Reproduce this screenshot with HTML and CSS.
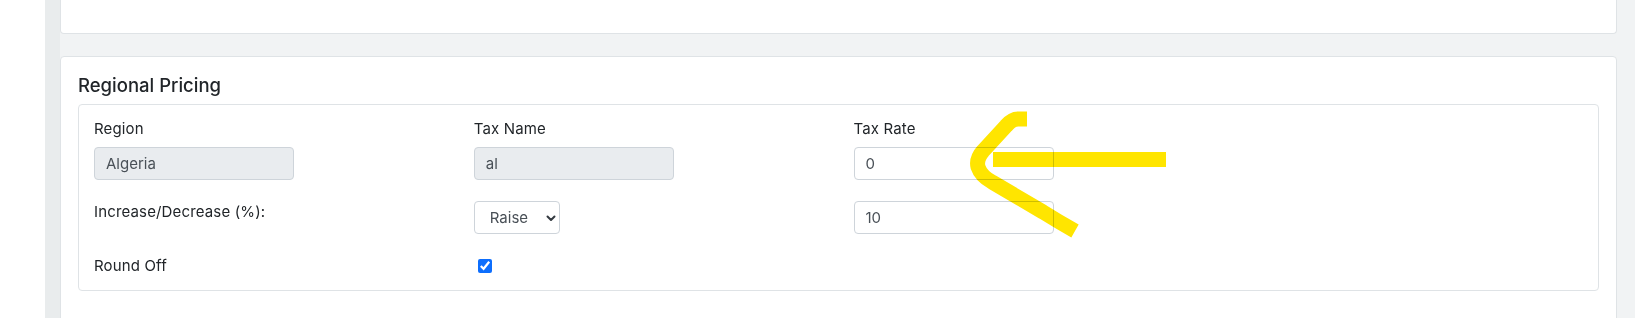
FILE: index.html
```html
<!DOCTYPE html>
<html lang="en">
<head>
  <meta charset="UTF-8" />
  <meta name="viewport" content="width=device-width, initial-scale=1.0" />
  <title>Regional Pricing</title>
  <link rel="stylesheet" href="styles.css">
</head>
<body>
  <div class="layout">
    <aside class="sidebar"></aside>

    <main class="content">
      <section class="card card-top"></section>

      <section class="card card-pricing">
        <h5 class="card-title">Regional Pricing</h5>

        <div class="pricing-box">
          <div class="pricing-row">
            <div class="cell">
              <label for="region">Region</label>
              <input type="text" id="region" class="field field-w" value="Algeria" disabled />
            </div>
            <div class="cell">
              <label for="taxName">Tax Name</label>
              <input type="text" id="taxName" class="field field-w" value="al" disabled />
            </div>
            <div class="cell">
              <label for="taxRate">Tax Rate</label>
              <input type="text" id="taxRate" class="field field-w" value="0" />
            </div>
            <div class="cell"></div>
          </div>

          <div class="pricing-row">
            <div class="cell">
              <label for="mode">Increase/Decrease (%):</label>
            </div>
            <div class="cell">
              <div class="select-wrap">
                <select id="mode" class="field select">
                  <option>Raise</option>
                  <option>Lower</option>
                </select>
                <svg class="chevron" width="10" height="7" viewBox="0 0 10 7">
                  <path d="M1.5 1.5 L5 5 L8.5 1.5" fill="none" stroke="#343a40" stroke-width="2" stroke-linecap="round" stroke-linejoin="round"/>
                </svg>
              </div>
            </div>
            <div class="cell">
              <input type="text" id="percent" class="field field-w" value="10" />
            </div>
            <div class="cell"></div>
          </div>

          <div class="pricing-row row-check">
            <div class="cell">
              <label for="roundOff">Round Off</label>
            </div>
            <div class="cell">
              <input type="checkbox" id="roundOff" class="check" checked />
            </div>
            <div class="cell"></div>
            <div class="cell"></div>
          </div>
        </div>
      </section>
    </main>

    <!-- marcação amarela por cima do campo Tax Rate -->
    <svg class="arrow" width="230" height="145" viewBox="0 0 230 145">
      <path d="M43 59.5 L216 59.5" />
      <path d="M77 19 L68 19 Q62 19 56 26 L33 51 Q26 59 28 67 Q31 76 42 82 L93 112 Q109 122 125 131" />
    </svg>
  </div>
</body>
</html>
```

FILE: styles.css
```css
body {
  margin: 0;
  font-family: Inter, "Noto Sans", sans-serif;
  color: #212529;
  background: #fff;
}

.layout {
  position: relative;
  display: flex;
  min-height: 318px;
  overflow: hidden;
}

.sidebar {
  width: 45px;
  flex: none;
  background: #fff;
}

.content {
  flex: 1;
  background: #f1f3f4;
  border-left: 15px solid #e9eced;
  padding-right: 18px;
}

.card {
  background: #fff;
  border: 1px solid #dfe3e6;
  border-radius: 4px;
}

.card-top {
  height: 33px;
  border-top: none;
  border-radius: 0 0 4px 4px;
}

.card-pricing {
  margin-top: 22px;
  padding: 17px 17px 40px;
}

.card-title {
  margin: 0 0 8px;
  font-size: 18.5px;
  font-weight: 500;
  line-height: 22px;
  color: #212529;
}

.pricing-box {
  border: 1px solid #dfe3e6;
  border-radius: 4px;
  padding: 13px 0 14px;
}

.pricing-row {
  display: grid;
  grid-template-columns: repeat(4, 1fr);
  margin-bottom: 21px;
}

.pricing-row:last-child {
  margin-bottom: 0;
}

.cell {
  padding: 0 15px;
  min-width: 0;
}

label {
  display: block;
  font-size: 15px;
  letter-spacing: 0.15px;
  line-height: 21px;
  color: #212529;
}

.cell label + .field {
  margin-top: 8px;
}

.field {
  display: block;
  box-sizing: border-box;
  height: 33px;
  padding: 0 11px;
  font-family: inherit;
  font-size: 15px;
  color: #495057;
  background: #fff;
  border: 1px solid #ced4da;
  border-radius: 4px;
  outline: none;
}

.field-w {
  width: 200px;
}

.field:disabled {
  background: #e9ecef;
  color: #495057;
}

.select-wrap {
  position: relative;
  width: 86px;
}

.select {
  width: 86px;
  padding: 0 24px 0 15px;
  appearance: none;
  -webkit-appearance: none;
}

.chevron {
  position: absolute;
  right: 4px;
  top: 14px;
  pointer-events: none;
}

.row-check .cell {
  height: 21px;
  display: flex;
  align-items: center;
}

.check {
  width: 14px;
  height: 14px;
  margin: 1px 0 0 4px;
  accent-color: #0d6efd;
}

.arrow {
  position: absolute;
  left: 950px;
  top: 100px;
  pointer-events: none;
  mix-blend-mode: multiply;
}

.arrow path {
  fill: none;
  stroke: #ffe500;
  stroke-width: 15;
  stroke-linejoin: round;
}
```
